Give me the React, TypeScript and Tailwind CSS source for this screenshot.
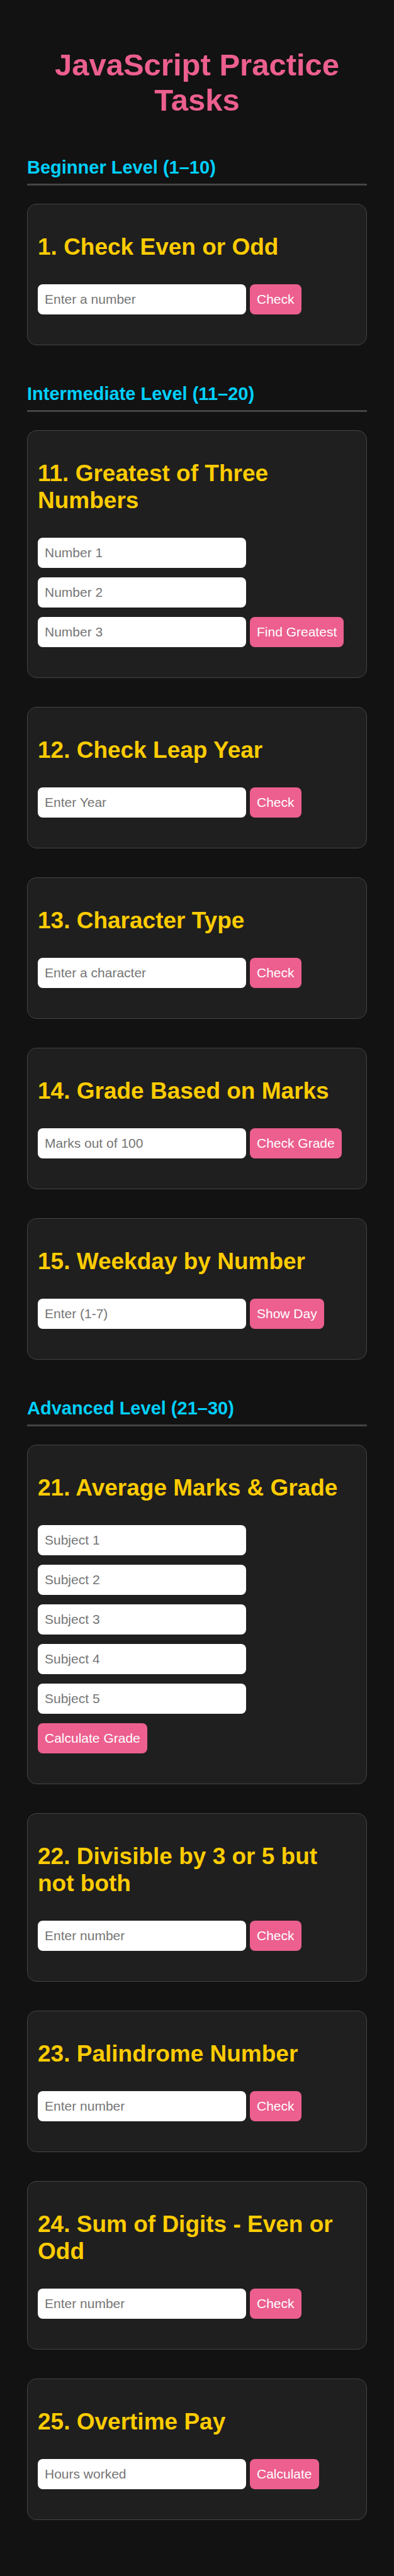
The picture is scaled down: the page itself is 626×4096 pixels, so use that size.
import React from "react";

type Task = {
  title: string;
  fields: string[];
  action: string;
  actionBelow?: boolean;
};

type Level = { name: string; tasks: Task[] };

const levels: Level[] = [
  {
    name: "Beginner Level (1–10)",
    tasks: [{ title: "1. Check Even or Odd", fields: ["Enter a number"], action: "Check" }],
  },
  {
    name: "Intermediate Level (11–20)",
    tasks: [
      {
        title: "11. Greatest of Three Numbers",
        fields: ["Number 1", "Number 2", "Number 3"],
        action: "Find Greatest",
      },
      { title: "12. Check Leap Year", fields: ["Enter Year"], action: "Check" },
      { title: "13. Character Type", fields: ["Enter a character"], action: "Check" },
      { title: "14. Grade Based on Marks", fields: ["Marks out of 100"], action: "Check Grade" },
      { title: "15. Weekday by Number", fields: ["Enter (1-7)"], action: "Show Day" },
    ],
  },
  {
    name: "Advanced Level (21–30)",
    tasks: [
      {
        title: "21. Average Marks & Grade",
        fields: ["Subject 1", "Subject 2", "Subject 3", "Subject 4", "Subject 5"],
        action: "Calculate Grade",
        actionBelow: true,
      },
      { title: "22. Divisible by 3 or 5 but not both", fields: ["Enter number"], action: "Check" },
      { title: "23. Palindrome Number", fields: ["Enter number"], action: "Check" },
      { title: "24. Sum of Digits - Even or Odd", fields: ["Enter number"], action: "Check" },
      { title: "25. Overtime Pay", fields: ["Hours worked"], action: "Calculate" },
    ],
  },
];

function ActionButton({ children }: { children: React.ReactNode }) {
  return (
    <button
      type="submit"
      className="h-12 cursor-pointer rounded-lg bg-[#ec5f8f] px-[11px] text-[21px] leading-6 whitespace-nowrap text-white"
    >
      {children}
    </button>
  );
}

function TaskCard({ task }: { task: Task }) {
  const last = task.fields.length - 1;
  return (
    <article className="rounded-[15px] border border-[#444444] bg-[#1f1f1f] px-4 pt-[46px] pb-12">
      <h3 className="text-[37px] leading-[43px] font-bold text-[#ffcc00]">{task.title}</h3>
      <form
        className="mt-[38px] flex flex-col gap-[15px]"
        onSubmit={(event) => event.preventDefault()}
      >
        {task.fields.map((field, index) => (
          <div key={field} className="flex flex-wrap items-center gap-1.5">
            <input
              type="text"
              aria-label={field}
              placeholder={field}
              className="h-12 w-[331px] max-w-full rounded-lg bg-white px-[11px] text-[21px] leading-6 text-black placeholder:text-[#757575]"
            />
            {index === last && !task.actionBelow && <ActionButton>{task.action}</ActionButton>}
          </div>
        ))}
        {task.actionBelow && (
          <div className="flex">
            <ActionButton>{task.action}</ActionButton>
          </div>
        )}
      </form>
    </article>
  );
}

export default function App() {
  return (
    <main className="min-h-screen bg-[#121212] px-[43px] pt-[75px] pb-[89px] font-['Liberation_Sans',Arial,sans-serif]">
      <h1 className="mb-[63px] text-center text-[49px] leading-[56px] font-bold text-[#ec5f8f]">
        JavaScript Practice Tasks
      </h1>
      <div className="flex flex-col gap-[61px]">
        {levels.map((level) => (
          <section key={level.name}>
            <h2 className="mb-[29px] border-b-3 border-[#444444] pb-[9px] text-[29px] leading-[33px] font-bold text-[#00d0ff]">
              {level.name}
            </h2>
            <div className="flex flex-col gap-[46px]">
              {level.tasks.map((task) => (
                <TaskCard key={task.title} task={task} />
              ))}
            </div>
          </section>
        ))}
      </div>
    </main>
  );
}
